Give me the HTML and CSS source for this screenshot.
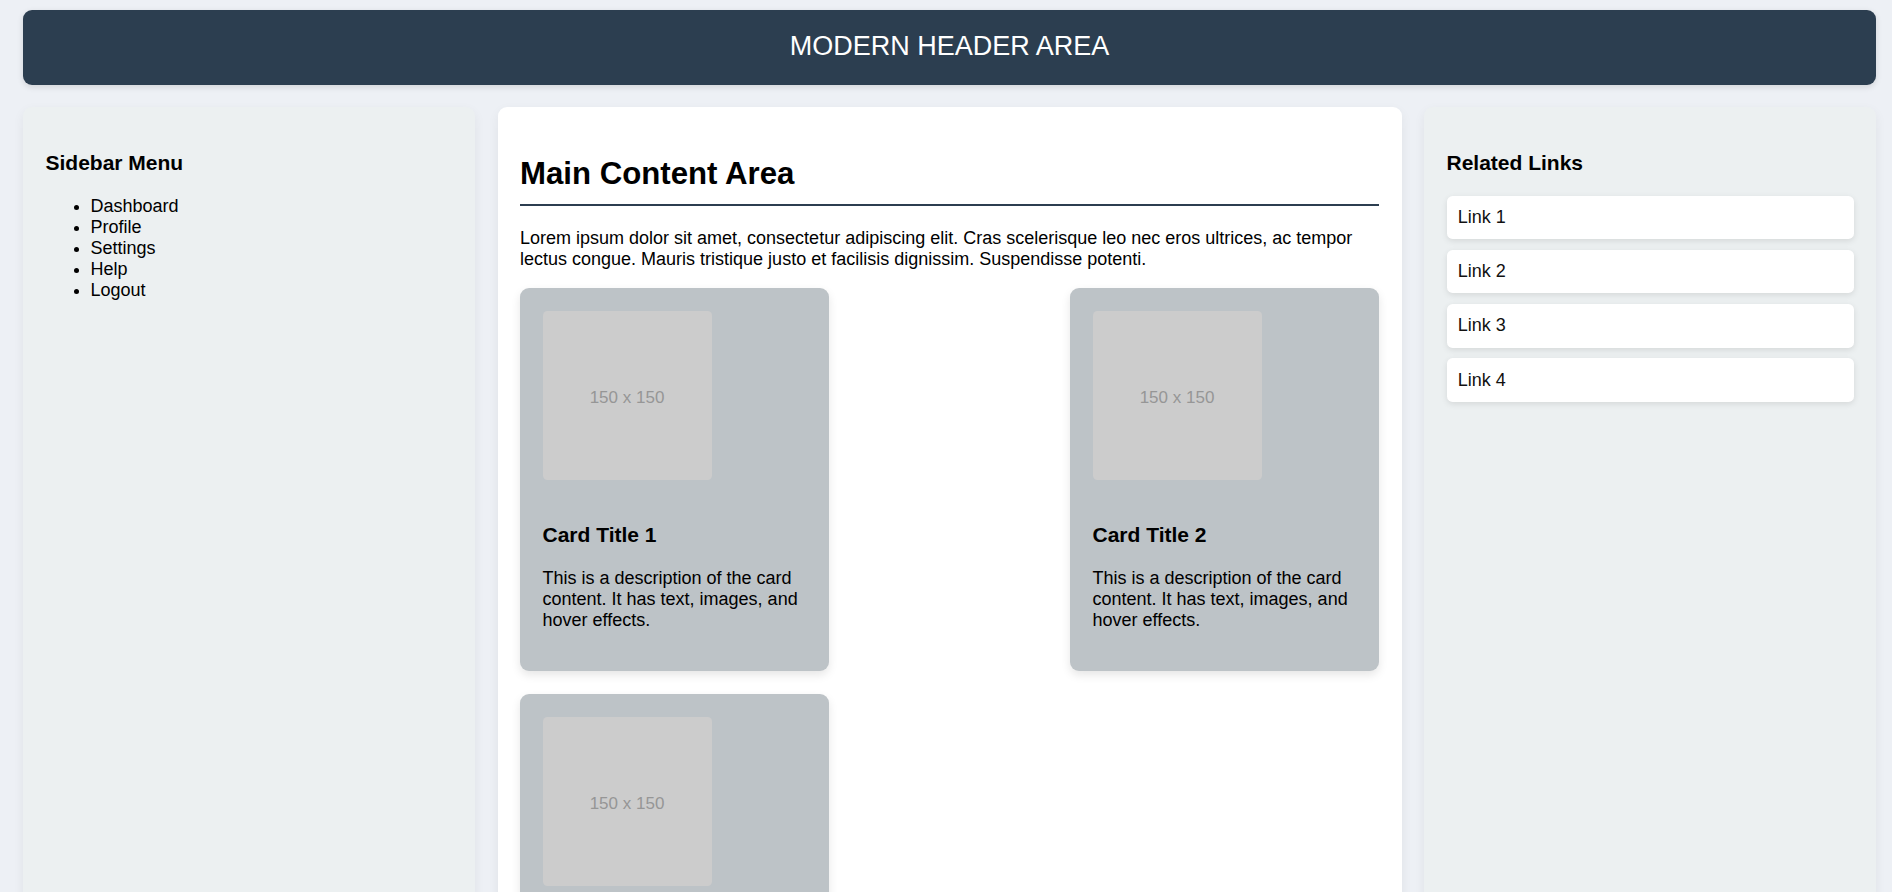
FILE: index.html
```html
<!DOCTYPE html>
<html lang="en">
<head>
<meta charset="utf-8">
<title>Modern Layout</title>
<link rel="stylesheet" href="styles.css">
</head>
<body>
<div class="page">
  <header class="site-header">MODERN HEADER AREA</header>
  <div class="layout">
    <aside class="sidebar">
      <h3 class="panel-title">Sidebar Menu</h3>
      <ul class="menu">
        <li>Dashboard</li>
        <li>Profile</li>
        <li>Settings</li>
        <li>Help</li>
        <li>Logout</li>
      </ul>
    </aside>
    <main class="main">
      <h2 class="main-title">Main Content Area</h2>
      <p class="intro">Lorem ipsum dolor sit amet, consectetur adipiscing elit. Cras scelerisque leo nec eros ultrices, ac tempor lectus congue. Mauris tristique justo et facilisis dignissim. Suspendisse potenti.</p>
      <div class="cards">
        <div class="card">
          <div class="card-img">150 x 150</div>
          <h3 class="card-title">Card Title 1</h3>
          <p class="card-text">This is a description of the card content. It has text, images, and hover effects.</p>
        </div>
        <div class="card">
          <div class="card-img">150 x 150</div>
          <h3 class="card-title">Card Title 2</h3>
          <p class="card-text">This is a description of the card content. It has text, images, and hover effects.</p>
        </div>
        <div class="card">
          <div class="card-img">150 x 150</div>
          <h3 class="card-title">Card Title 3</h3>
          <p class="card-text">This is a description of the card content. It has text, images, and hover effects.</p>
        </div>
      </div>
    </main>
    <aside class="sidebar">
      <h3 class="panel-title">Related Links</h3>
      <a class="link" href="#">Link 1</a>
      <a class="link" href="#">Link 2</a>
      <a class="link" href="#">Link 3</a>
      <a class="link" href="#">Link 4</a>
    </aside>
  </div>
</div>
</body>
</html>
```
FILE: styles.css
```css
html, body {
  margin: 0;
  padding: 0;
}

body {
  background: #edf0f5;
  font-family: "Liberation Sans", Arial, sans-serif;
  font-size: 18px;
  color: #000;
}

.page {
  padding: 10px 16px 0 23px;
}

.site-header {
  background: #2c3e50;
  color: #fff;
  font-size: 27px;
  line-height: 31px;
  padding: 21px 0 23px;
  text-align: center;
  border-radius: 9px;
  box-shadow: 0 2px 6px rgba(0, 0, 0, 0.12);
  margin-bottom: 22px;
}

.layout {
  display: grid;
  grid-template-columns: 1fr 2fr 1fr;
  gap: 22.5px;
  align-items: stretch;
}

.sidebar {
  background: #ecf0f1;
  padding: 22.5px;
  border-radius: 9px;
  box-shadow: 0 4px 12px rgba(0, 0, 0, 0.06);
}

.panel-title {
  font-size: 21px;
  font-weight: bold;
  margin: 21px 0;
}

.menu {
  margin: 21px 0;
  padding-left: 45px;
}

.menu li {
  line-height: 21.2px;
}

.main {
  background: #fff;
  padding: 22.5px;
  border-radius: 9px;
  box-shadow: 0 4px 12px rgba(0, 0, 0, 0.06);
  min-height: 1100px;
}

.main-title {
  font-size: 31.2px;
  font-weight: bold;
  margin: 26px 0 22.5px;
  padding-bottom: 12px;
  border-bottom: 2px solid #2c3e50;
}

.intro {
  margin: 0 0 18px;
}

.cards {
  display: flex;
  flex-wrap: wrap;
  justify-content: space-between;
  row-gap: 23px;
}

.card {
  width: 309px;
  box-sizing: border-box;
  background: #bdc3c7;
  padding: 22.5px;
  border-radius: 9px;
  box-shadow: 0 4px 10px rgba(0, 0, 0, 0.1);
}

.card-img {
  width: 169px;
  height: 169px;
  box-sizing: border-box;
  padding-top: 5px;
  background: #cccccc;
  border-radius: 4.5px;
  display: flex;
  align-items: center;
  justify-content: center;
  color: #969696;
  font-size: 17px;
  margin-bottom: 43px;
}

.card-title {
  font-size: 21px;
  font-weight: bold;
  margin: 21px 0;
}

.card-text {
  margin: 21px 0 18px;
}

.link {
  display: block;
  background: #fff;
  color: #111;
  text-decoration: none;
  padding: 11.25px;
  border-radius: 5.6px;
  margin-bottom: 10.8px;
  box-shadow: 0 2px 6px rgba(0, 0, 0, 0.1);
}
```
